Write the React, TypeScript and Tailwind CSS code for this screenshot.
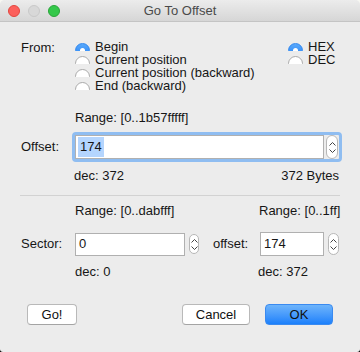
import React from 'react';

const font = { fontFamily: '"Liberation Sans", Arial, sans-serif' };

function Radio({ on }: { on?: boolean }) {
  return (
    <div className="mt-[3px] h-[8px] w-[15px] shrink-0 overflow-hidden">
      {on ? (
        <div className="flex h-[15px] w-[15px] items-center justify-center rounded-full border border-[#2f86ee] bg-gradient-to-b from-[#5aa9fb] to-[#1b7ff5]">
          <div className="h-[5px] w-[5px] rounded-full bg-white" />
        </div>
      ) : (
        <div className="h-[15px] w-[15px] rounded-full border border-[#a9a9a9] bg-white" />
      )}
    </div>
  );
}

function Stepper({ w = 11, h = 24 }: { w?: number; h?: number }) {
  return (
    <div
      className="flex shrink-0 flex-col items-center justify-center gap-[3px] rounded-full border border-[#b7b7b7] bg-white"
      style={{ width: w, height: h }}
    >
      <svg width="7" height="4" viewBox="0 0 7 4">
        <path d="M0.5 3.5 L3.5 0.5 L6.5 3.5" fill="none" stroke="#444" strokeWidth="1" />
      </svg>
      <svg width="7" height="4" viewBox="0 0 7 4">
        <path d="M0.5 0.5 L3.5 3.5 L6.5 0.5" fill="none" stroke="#444" strokeWidth="1" />
      </svg>
    </div>
  );
}

function Btn({ children, primary, w }: { children: React.ReactNode; primary?: boolean; w: number }) {
  return (
    <div
      className={
        'flex h-[21px] items-center justify-center rounded-[4px] border text-[13px] text-[#111] ' +
        (primary
          ? 'border-[#3a8af0] bg-gradient-to-b from-[#6db4fb] to-[#1a80fb]'
          : 'border-[#b9b9b9] border-b-[#a4a4a4] bg-white')
      }
      style={{ width: w }}
    >
      {children}
    </div>
  );
}

function Choice({ on, label }: { on?: boolean; label: string }) {
  return (
    <div className="flex h-[13px] items-start gap-[5px]">
      <Radio on={on} />
      <span className="h-[13px] overflow-visible pt-[1px] leading-[12px]">{label}</span>
    </div>
  );
}

export default function App() {
  return (
    <div className="h-[352px] w-[360px] bg-[linear-gradient(to_bottom,#f7f7f2_50%,#000_50%)]" style={font}>
      <div className="flex h-full w-full flex-col overflow-hidden rounded-t-[5px] rounded-b-[3px] bg-[#ececec] text-[13px] text-[#161616]">
        {/* title bar */}
        <div className="relative flex h-[22px] shrink-0 items-center justify-center border-b border-[#c4c4c4] bg-gradient-to-b from-[#ececec] to-[#d6d6d6]">
          <div className="absolute left-[8px] top-[5px] flex gap-[8px]">
            <div className="h-[12px] w-[12px] rounded-full border border-[#e2463f] bg-[#fc605c]" />
            <div className="h-[12px] w-[12px] rounded-full border border-[#c8c8c8] bg-[#d8d8d8]" />
            <div className="h-[12px] w-[12px] rounded-full border border-[#2aa43a] bg-[#34c84a]" />
          </div>
          <span className="text-[13px] leading-[16px] text-[#4a4a4a]">Go To Offset</span>
        </div>

        {/* From */}
        <div className="mt-[18px] flex pl-[21px] leading-[13px]">
          <div className="w-[54px] pt-[1px]">From:</div>
          <div className="flex flex-1 flex-col">
            {['Begin', 'Current position', 'Current position (backward)', 'End (backward)'].map((t, i) => (
              <Choice key={t} on={i === 0} label={t} />
            ))}
          </div>
          <div className="mr-[26px] flex w-[46px] flex-col">
            <Choice on label="HEX" />
            <Choice label="DEC" />
          </div>
        </div>

        {/* offset section */}
        <div className="mt-[18px] pl-[75px] leading-[16px]">Range: [0..1b57fffff]</div>
        <div className="mt-[6px] flex items-center pl-[21px]">
          <div className="w-[51px]">Offset:</div>
          <div className="flex h-[30px] w-[270px] items-center rounded-[4px] border-[3px] border-[#8fbdf1] bg-[#ececec]">
            <div className="flex h-full flex-1 items-center border border-[#b0b0b0] bg-white pl-[2px]">
              <span className="bg-[#b4d5fe] px-[2px] leading-[20px]">174</span>
            </div>
            <div className="ml-[2px] mr-[1px]">
              <Stepper w={12} h={24} />
            </div>
          </div>
        </div>
        <div className="mt-[6px] flex justify-between pl-[74px] pr-[21px] leading-[16px]">
          <span>dec: 372</span>
          <span>372 Bytes</span>
        </div>

        <div className="mx-[20px] mt-[11px] h-px bg-[#d2d2d2]" />

        {/* sector section */}
        <div className="mt-[7px] flex pl-[75px] leading-[16px]">
          <span className="w-[184px]">Range: [0..dabfff]</span>
          <span>Range: [0..1ff]</span>
        </div>
        <div className="mt-[13px] flex items-center pl-[21px]">
          <div className="w-[54px]">Sector:</div>
          <div className="flex h-[23px] w-[110px] items-center border border-[#b0b0b0] bg-white pl-[3px]">0</div>
          <div className="ml-[4px]">
            <Stepper w={10} h={20} />
          </div>
          <div className="ml-[14px] w-[47px]">offset:</div>
          <div className="flex h-[24px] w-[64px] items-center border border-[#b0b0b0] bg-white pl-[3px]">174</div>
          <div className="ml-[4px]">
            <Stepper w={11} h={22} />
          </div>
        </div>
        <div className="mt-[8px] flex pl-[75px] leading-[16px]">
          <span className="w-[183px]">dec: 0</span>
          <span>dec: 372</span>
        </div>

        {/* buttons */}
        <div className="mt-[24px] flex items-center pl-[27px]">
          <Btn w={50}>Go!</Btn>
          <div className="ml-[105px]">
            <Btn w={68}>Cancel</Btn>
          </div>
          <div className="ml-[15px]">
            <Btn w={68} primary>
              OK
            </Btn>
          </div>
        </div>
      </div>
    </div>
  );
}
